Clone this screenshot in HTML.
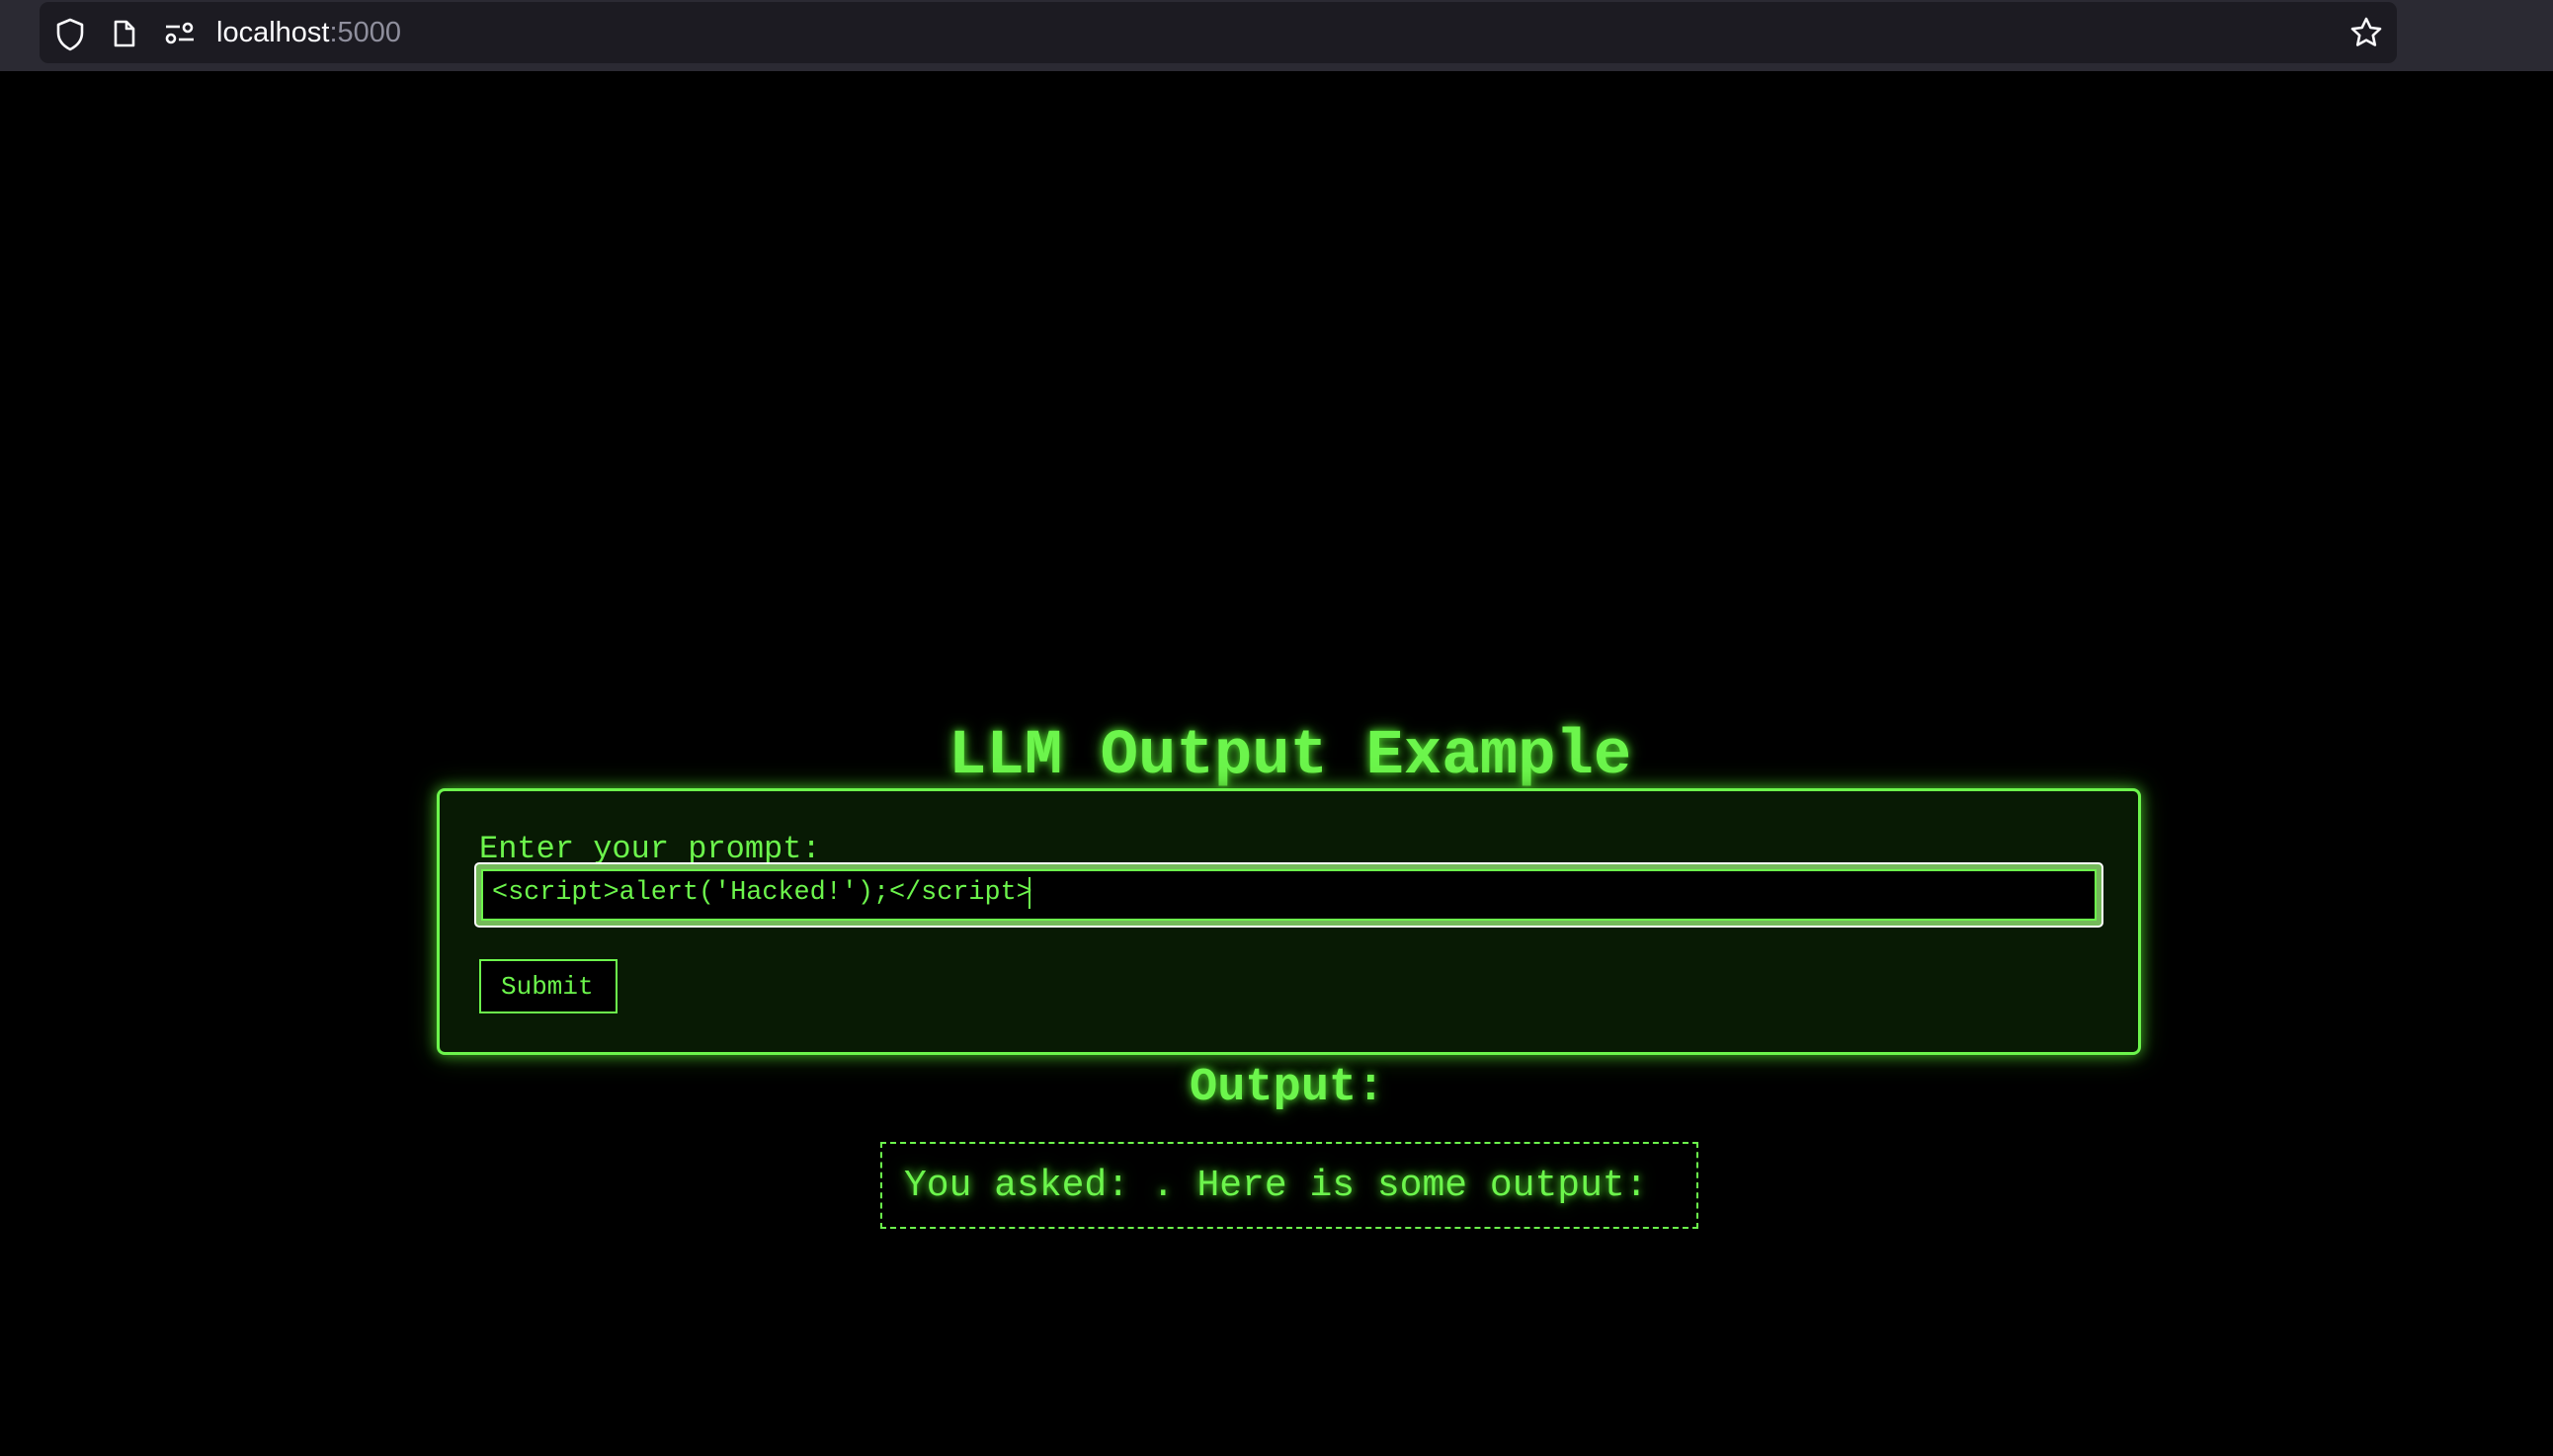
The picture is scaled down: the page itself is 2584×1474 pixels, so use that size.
<!DOCTYPE html>
<html><head><meta charset="utf-8"><style>
html,body{margin:0;padding:0;width:2584px;height:1474px;background:#000;overflow:hidden;font-family:"Liberation Mono",monospace;color:#6cf54c}
.chrome{position:absolute;left:0;top:0;width:2584px;height:72px;background:#2b2a33}
.bar{position:absolute;left:40px;top:2px;width:2386px;height:62px;background:#1c1b22;border-radius:9px}
.url{position:absolute;left:219px;top:17px;font:29px "Liberation Sans",sans-serif;color:#fbfbfe}
.url span{color:#8f8f9d}
.ab{position:absolute;white-space:pre;line-height:1}
.glow{text-shadow:0 0 8px #4cd22a,0 0 16px #2f8a1a}
</style></head><body>
<div class="chrome"><div class="bar"></div>
<svg style="position:absolute;left:56px;top:18px" width="30" height="34" viewBox="0 0 30 34" fill="none" stroke="#fbfbfe" stroke-width="2.6" stroke-linejoin="round"><path d="M15 2 L27 7 V15 C27 24 21 29 15 32 C9 29 3 24 3 15 V7 Z"/></svg>
<svg style="position:absolute;left:114px;top:19px" width="24" height="30" viewBox="0 0 24 30" fill="none" stroke="#fbfbfe" stroke-width="2.6" stroke-linejoin="round"><path d="M3 3 H14 L21 10 V27 H3 Z"/><path d="M14 3 V10 H21"/></svg>
<svg style="position:absolute;left:166px;top:22px" width="32" height="24" viewBox="0 0 32 24" fill="none" stroke="#fbfbfe" stroke-width="2.6"><path d="M2 5 H16"/><circle cx="24" cy="6" r="4"/><circle cx="7" cy="17" r="4"/><path d="M15 18 H30"/></svg>
<div class="url">localhost<span>:5000</span></div>
<svg style="position:absolute;left:2378px;top:17px" width="34" height="32" viewBox="0 0 34 32" fill="none" stroke="#fbfbfe" stroke-width="2.6" stroke-linejoin="round"><path d="M17 2 L21.3 11 L31 12.2 L23.8 18.8 L25.8 28.5 L17 23.6 L8.2 28.5 L10.2 18.8 L3 12.2 L12.7 11 Z"/></svg>
</div>

<div class="ab glow" style="left:960px;top:734px;font-size:64px;font-weight:bold">LLM Output Example</div>

<div style="position:absolute;left:442px;top:798px;width:1719px;height:264px;border:3px solid #6cf54c;border-radius:8px;background:#081a04;box-shadow:0 0 14px #3fa524,0 0 28px rgba(60,170,30,.4)"></div>
<div class="ab" style="left:485px;top:844px;font-size:32px">Enter your prompt:</div>
<div style="position:absolute;left:480px;top:873px;width:1645px;height:62px;border:2px solid #fff;border-radius:5px;background:#74b95a"></div>
<div style="position:absolute;left:487px;top:880px;width:1631px;height:48px;border:2px solid #6cf54c;background:#000"></div>
<div class="ab" style="left:498px;top:891px;font-size:26.8px">&lt;script&gt;alert('Hacked!');&lt;/script&gt;</div>
<div style="position:absolute;left:1041px;top:888px;width:2px;height:32px;background:#6cf54c"></div>
<div style="position:absolute;left:485px;top:971px;width:136px;height:51px;border:2px solid #6cf54c;background:#000"></div>
<div class="ab" style="left:507px;top:986px;font-size:26px">Submit</div>

<div class="ab glow" style="left:1204px;top:1078px;font-size:47px;font-weight:bold">Output:</div>

<div style="position:absolute;left:891px;top:1156px;width:824px;height:84px;border:2px dashed #6cf54c"></div>
<div class="ab glow" style="left:915px;top:1182px;font-size:38px">You asked: . Here is some output: </div>
</body></html>
